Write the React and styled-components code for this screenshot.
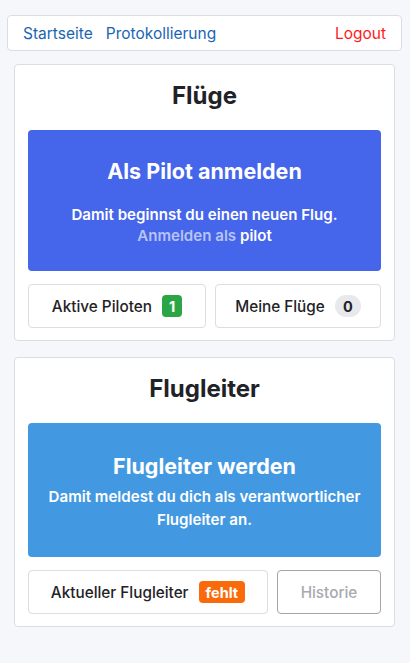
import React from 'react';
import styled, { createGlobalStyle } from 'styled-components';

const GlobalStyle = createGlobalStyle`
  body {
    margin: 0;
    background: #f6f7fb;
    font-family: Inter, "Noto Sans", sans-serif;
    color: #1f2328;
  }
  * { box-sizing: border-box; }
`;

const Page = styled.div`
  padding: 15px 8px 20px 7px;
  display: flex;
  flex-direction: column;
  gap: 13px;
`;

const Nav = styled.nav`
  height: 36px;
  background: #fff;
  border: 1px solid #dcdde3;
  border-radius: 4px;
  display: flex;
  align-items: center;
  padding: 0 15px;
  gap: 13px;
  font-size: 15.5px;
`;

const NavLink = styled.a`
  color: ${p => (p.$danger ? '#ff1a1a' : '#1a64b4')};
  text-decoration: none;
  margin-left: ${p => (p.$push ? 'auto' : '0')};
`;

const Cards = styled.div`
  padding: 0 7px;
  display: flex;
  flex-direction: column;
  gap: 16px;
`;

const Card = styled.section`
  background: #fff;
  border: 1px solid #dcdde3;
  border-radius: 4px;
  padding: 13px 13px 12px;
  display: flex;
  flex-direction: column;
`;

const CardTitle = styled.h2`
  margin: 0 0 16px;
  text-align: center;
  font-size: 24px;
  line-height: 36px;
  font-weight: 700;
  color: #1f2328;
`;

const Hero = styled.div`
  background: ${p => p.$color};
  border-radius: 4px;
  color: #fff;
  text-align: center;
  padding: ${p => p.$pad};
`;

const HeroTitle = styled.div`
  font-size: 21.5px;
  line-height: 28px;
  font-weight: 700;
  margin-bottom: ${p => p.$gap}px;
`;

const HeroText = styled.div`
  font-size: 15.1px;
  line-height: ${p => p.$lh}px;
  font-weight: 600;
`;

const Muted = styled.span`
  color: #b8c3f7;
`;

const Actions = styled.div`
  display: grid;
  grid-template-columns: ${p => p.$cols};
  gap: 9px;
  margin-top: 13px;
`;

const ActionButton = styled.button`
  height: 44px;
  background: #fff;
  border: 1px solid ${p => (p.$disabled ? '#a3a5ab' : '#dcdde3')};
  border-radius: 4px;
  font-family: inherit;
  font-size: 15.3px;
  font-weight: 500;
  color: ${p => (p.$disabled ? '#a8aab0' : '#1f2328')};
  display: flex;
  align-items: center;
  justify-content: center;
  gap: 10px;
  padding: 0 8px;
`;

const Badge = styled.span`
  display: inline-flex;
  align-items: center;
  justify-content: center;
  height: 22px;
  min-width: ${p => (p.$pill ? '26px' : '20px')};
  padding: 0 7px;
  border-radius: ${p => (p.$pill ? '11px' : '4px')};
  background: ${p => p.$bg};
  color: ${p => p.$fg || '#fff'};
  font-size: 14.5px;
  font-weight: 700;
`;

export default function App() {
  return (
    <>
      <GlobalStyle />
      <Page>
        <Nav>
          <NavLink href="#">Startseite</NavLink>
          <NavLink href="#">Protokollierung</NavLink>
          <NavLink href="#" $push $danger>Logout</NavLink>
        </Nav>
        <Cards>
          <Card>
            <CardTitle>Flüge</CardTitle>
            <Hero $color="#4565ea" $pad="27px 12px 25px">
              <HeroTitle $gap={19}>Als Pilot anmelden</HeroTitle>
              <HeroText $lh={21}>Damit beginnst du einen neuen Flug.</HeroText>
              <HeroText $lh={21}><Muted>Anmelden als</Muted> pilot</HeroText>
            </Hero>
            <Actions $cols="178fr 166fr">
              <ActionButton>Aktive Piloten <Badge $bg="#2aa744">1</Badge></ActionButton>
              <ActionButton>Meine Flüge <Badge $pill $bg="#e8e9ec" $fg="#1f2328">0</Badge></ActionButton>
            </Actions>
          </Card>
          <Card>
            <CardTitle>Flugleiter</CardTitle>
            <Hero $color="#4399e1" $pad="29px 12px 26px">
              <HeroTitle $gap={5}>Flugleiter werden</HeroTitle>
              <HeroText $lh={23}>Damit meldest du dich als verantwortlicher Flugleiter an.</HeroText>
            </Hero>
            <Actions $cols="1fr 104px">
              <ActionButton>Aktueller Flugleiter <Badge $bg="#fb6a0a">fehlt</Badge></ActionButton>
              <ActionButton $disabled>Historie</ActionButton>
            </Actions>
          </Card>
        </Cards>
      </Page>
    </>
  );
}
